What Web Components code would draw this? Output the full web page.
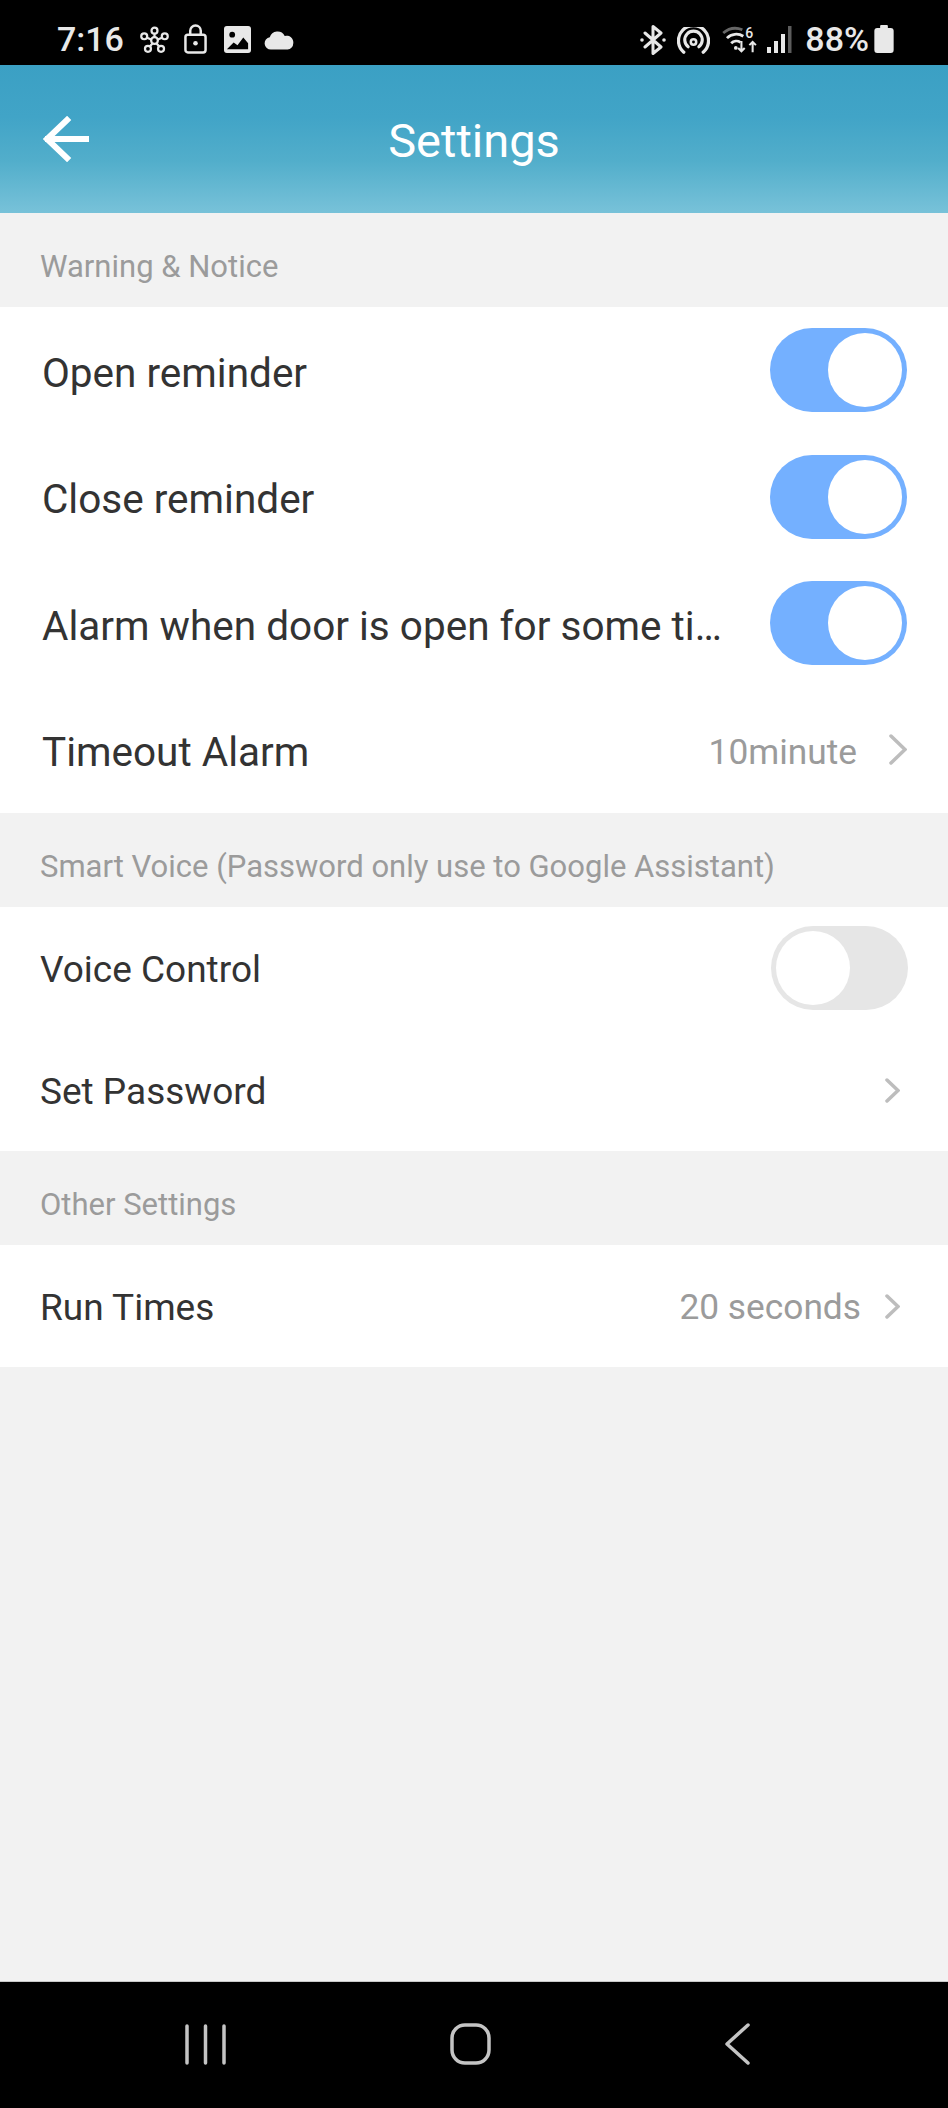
<!DOCTYPE html>
<html>
<head>
<meta charset="utf-8">
<title>Settings</title>
<style>
  html, body { margin: 0; height: 100%; }
  body {
    display: flex;
    flex-direction: column;
    height: 2108px;
    overflow: hidden;
    background: #f2f2f2;
    font-family: Roboto, "Liberation Sans", sans-serif;
  }
  .group { display: block; background: #fff; }
</style>
</head>
<body>
<status-bar></status-bar>
<app-header>Settings</app-header>

<section-label>Warning &amp; Notice</section-label>
<div class="group">
  <setting-row size="large" on>Open reminder</setting-row>
  <setting-row size="large" on>Close reminder</setting-row>
  <setting-row size="large" on>Alarm when door is open for some ti…</setting-row>
  <setting-row size="large" value="10minute">Timeout Alarm</setting-row>
</div>

<section-label>Smart Voice (Password only use to Google Assistant)</section-label>
<div class="group">
  <setting-row toggle>Voice Control</setting-row>
  <setting-row arrow>Set Password</setting-row>
</div>

<section-label>Other Settings</section-label>
<div class="group">
  <setting-row value="20 seconds">Run Times</setting-row>
</div>

<page-filler></page-filler>
<nav-bar></nav-bar>

<script>
class StatusBar extends HTMLElement {
  constructor() {
    super();
    const root = this.attachShadow({mode: "open"});
    root.innerHTML = `
      <style>
        :host { display: flex; align-items: flex-start; height: 65px; background: #000; color: #e8e8e8; flex: none;
                font-family: Roboto, sans-serif; font-weight: 500; padding: 0 54px 0 57px; box-sizing: border-box; }
        .time { font-size: 34px; line-height: 34px; margin: 22px 16px 0 0; }
        .pct { font-size: 34px; line-height: 34px; margin: 22px 0 0 0; }
        svg { display: block; flex: none; }
        .space { flex: 1; }
      </style>
      <span class="time">7:16</span>
      <svg width="29" height="28" viewBox="0 0 31 30" fill="none" stroke="#e8e8e8" stroke-width="2.400" style="margin:26px 15px 0 0">
        <circle cx="15.500" cy="5" r="3.200"/><circle cx="4.500" cy="11" r="3.200"/><circle cx="26.500" cy="11" r="3.200"/>
        <circle cx="8.500" cy="24.500" r="3.200"/><circle cx="22.500" cy="24.500" r="3.200"/><circle cx="15.500" cy="15.500" r="3.600"/>
        <path d="M15.500 8v4M7.500 12.500l4.500 2M23.500 12.500l-4.500 2M10.500 22l3-3.500M20.500 22l-3-3.500"/>
      </svg>
      <svg width="23" height="30" viewBox="0 0 24 31" fill="none" stroke="#e8e8e8" stroke-width="2.600" style="margin:24px 17px 0 0">
        <rect x="1.500" y="11" width="21" height="18.500" rx="2.500"/>
        <path d="M6.500 11V7a5.500 5.500 0 0 1 11 0v4"/>
        <circle cx="12" cy="20" r="2.400" fill="#e8e8e8" stroke="none"/>
      </svg>
      <svg width="27" height="27" viewBox="0 0 28 28" style="margin:26px 13px 0 0">
        <rect width="28" height="28" rx="3" fill="#e8e8e8"/>
        <circle cx="8.500" cy="9" r="3" fill="#000"/>
        <path d="M3 24l7-7 4 3 6-8 5 6v6z" fill="#000"/>
      </svg>
      <svg width="30" height="20" viewBox="0 0 31 21" style="margin-top:30px">
        <path d="M7 20.500a6.500 6.500 0 0 1-1.200-12.900A8.500 8.500 0 0 1 21.500 6.200 7.200 7.200 0 0 1 30.500 14a6.500 6.500 0 0 1-6 6.500z" fill="#e8e8e8"/>
      </svg>
      <span class="space"></span>
      <svg width="26" height="30" viewBox="0 0 26 30" fill="none" stroke="#e8e8e8" stroke-width="3" stroke-linejoin="round" stroke-linecap="round" style="margin:25px 11px 0 0">
        <path d="M5 8l16 14-8 6.500V1.500L21 8 5 22"/>
        <circle cx="2" cy="15" r="1.800" fill="#e8e8e8" stroke="none"/>
        <circle cx="24" cy="15" r="1.800" fill="#e8e8e8" stroke="none"/>
      </svg>
      <svg width="33" height="27" viewBox="0 0 34 27" fill="none" stroke="#e8e8e8" stroke-linecap="round" style="margin:27px 11px 0 0">
        <path d="M7 25.500A15.500 15.500 0 1 1 27 25.500" stroke-width="3.400"/>
        <path d="M11.500 20A9 9 0 1 1 22.500 20" stroke-width="3.200"/>
        <circle cx="17" cy="15" r="2.800" stroke-width="2.600"/>
      </svg>
      <svg width="39" height="28" viewBox="0 0 40 30" fill="none" stroke="#e8e8e8" style="margin:26px 7px 0 0">
        <path d="M1.500 7.500A20 20 0 0 1 22 4" stroke="#666" stroke-width="3"/>
        <path d="M5.500 13A14 14 0 0 1 23 11" stroke-width="3"/>
        <path d="M10 18.500A8 8 0 0 1 20 17.500" stroke-width="3"/>
        <circle cx="15" cy="23.500" r="2" fill="#e8e8e8" stroke="none"/>
        <path d="M21 16v11m-3.500-3.500l3.500 3.500 3.500-3.500M33 28V17m-3.500 3.500L33 17l3.500 3.500" stroke-width="2.200"/>
        <text x="25" y="13" font-size="15" font-family="Roboto, sans-serif" font-weight="500" fill="#e8e8e8" stroke="none">6</text>
      </svg>
      <svg width="25" height="27" viewBox="0 0 25 27" fill="#e8e8e8" style="margin:26px 13px 0 0">
        <rect x="0" y="21" width="4" height="6"/><rect x="7" y="15" width="4" height="12"/>
        <rect x="14" y="8" width="4" height="19"/><rect x="21" y="0" width="3.500" height="27" fill="#5c5c5c"/>
      </svg>
      <span class="pct">88%</span>
      <svg width="20" height="28" viewBox="0 0 20 29" fill="#e8e8e8" style="margin:25px 0 0 5px">
        <rect x="6" y="0" width="8" height="4" rx="1"/>
        <rect x="0" y="3" width="20" height="26" rx="3"/>
      </svg>
    `;
  }
}

class AppHeader extends HTMLElement {
  constructor() {
    super();
    const root = this.attachShadow({mode: "open"});
    root.innerHTML = `
      <style>
        :host { display: grid; grid-template-columns: 1fr auto 1fr; align-items: center; height: 148px; flex: none;
                box-sizing: border-box; padding-left: 43px; padding-right: 43px; color: #fff;
                background: linear-gradient(180deg, #3ba0c4 0%, #41a4c7 35%, #52aecb 65%, #78c2d9 100%); }
        svg { display: block; }
        .title { font-size: 47px; line-height: 60px; padding-top: 4px; }
      </style>
      <svg width="46" height="46" viewBox="0 0 46 46" fill="none" stroke="#fff" stroke-width="6" stroke-linecap="square">
        <path d="M44 23H5M24 4L4 23l20 19"/>
      </svg>
      <span class="title"><slot></slot></span>
    `;
  }
}

class SectionLabel extends HTMLElement {
  constructor() {
    super();
    const root = this.attachShadow({mode: "open"});
    root.innerHTML = `
      <style>
        :host { display: flex; align-items: center; height: 94px; flex: none; padding: 13px 0 0 40px; box-sizing: border-box;
                background: #f2f2f2; color: #9b9b9b; font-size: 31px; }
      </style>
      <slot></slot>
    `;
  }
}

class ToggleSwitch extends HTMLElement {
  constructor() {
    super();
    const root = this.attachShadow({mode: "open"});
    root.innerHTML = `
      <style>
        :host { display: flex; width: 137px; height: 84px; box-sizing: border-box; padding: 5px; border-radius: 42px;
                background: #e6e6e6; flex: none; }
        :host([on]) { background: #74b0ff; justify-content: flex-end; }
        .knob { width: 74px; height: 74px; border-radius: 50%; background: #fff; }
      </style>
      <div class="knob"></div>
    `;
  }
}

class SettingRow extends HTMLElement {
  constructor() {
    super();
    const root = this.attachShadow({mode: "open"});
    const large = this.getAttribute("size") === "large";
    const value = this.getAttribute("value");
    const hasOn = this.hasAttribute("on");
    let trail = "";
    if (hasOn || this.hasAttribute("toggle")) {
      trail = `<toggle-switch ${hasOn ? "on" : ""}></toggle-switch>`;
    } else {
      const w = large ? 18 : 15, h = large ? 31 : 25;
      trail = `${value ? `<span class="value">${value}</span>` : ""}
        <svg class="chev" width="${w}" height="${h}" viewBox="0 0 ${w} ${h}" fill="none" stroke="#bdbdbd" stroke-width="3.500" stroke-linecap="round">
          <path d="M2 2L${w - 2} ${h / 2}L2 ${h - 2}"/>
        </svg>`;
    }
    root.innerHTML = `
      <style>
        :host { display: flex; align-items: center; box-sizing: border-box; background: #fff; color: #333;
                height: 122px; font-size: 37px; padding: 0 48px 0 40px; }
        :host([toggle]) { padding-right: 40px; }
        :host([size="large"]) { height: 126.5px; font-size: 40.5px; padding: 0 41px 0 42px; }
        .label { flex: 1; white-space: nowrap; padding-top: 2px; }
        :host([size="large"]) .label { padding-top: 5px; }
        .value { color: #9b9b9b; font-size: 35.300px; margin-right: 24px; padding-top: 2px; }
        :host([size="large"]) .value { margin-right: 32px; padding-top: 5px; }
        svg { display: block; flex: none; }
      </style>
      <span class="label"><slot></slot></span>
      ${trail}
    `;
  }
}

class PageFiller extends HTMLElement {
  constructor() {
    super();
    this.attachShadow({mode: "open"}).innerHTML = `<style>:host { display: block; flex: 1; background: #f2f2f2; }</style>`;
  }
}

class NavBar extends HTMLElement {
  constructor() {
    super();
    const root = this.attachShadow({mode: "open"});
    root.innerHTML = `
      <style>
        :host { display: flex; align-items: center; height: 127px; flex: none; background: #000; box-sizing: border-box;
                border-top: 1px solid #c9c9c9; padding: 0 0 2px 185px; }
        svg { display: block; flex: none; }
      </style>
      <svg width="41" height="41" viewBox="0 0 41 41" stroke="#c4c4c4" stroke-width="3.500" stroke-linecap="round" fill="none">
        <path d="M2 2v37M20.500 2v37M39 2v37"/>
      </svg>
      <svg width="41" height="42" viewBox="0 0 41 42" stroke="#c4c4c4" stroke-width="3.500" fill="none" style="margin-left:224px">
        <rect x="2" y="2" width="37" height="38" rx="13"/>
      </svg>
      <svg width="25" height="42" viewBox="0 0 25 42" stroke="#c4c4c4" stroke-width="3.500" stroke-linecap="round" stroke-linejoin="round" fill="none" style="margin-left:234px">
        <path d="M23 2L2 21l21 19"/>
      </svg>
    `;
  }
}

customElements.define("status-bar", StatusBar);
customElements.define("app-header", AppHeader);
customElements.define("section-label", SectionLabel);
customElements.define("toggle-switch", ToggleSwitch);
customElements.define("setting-row", SettingRow);
customElements.define("page-filler", PageFiller);
customElements.define("nav-bar", NavBar);
</script>
</body>
</html>
